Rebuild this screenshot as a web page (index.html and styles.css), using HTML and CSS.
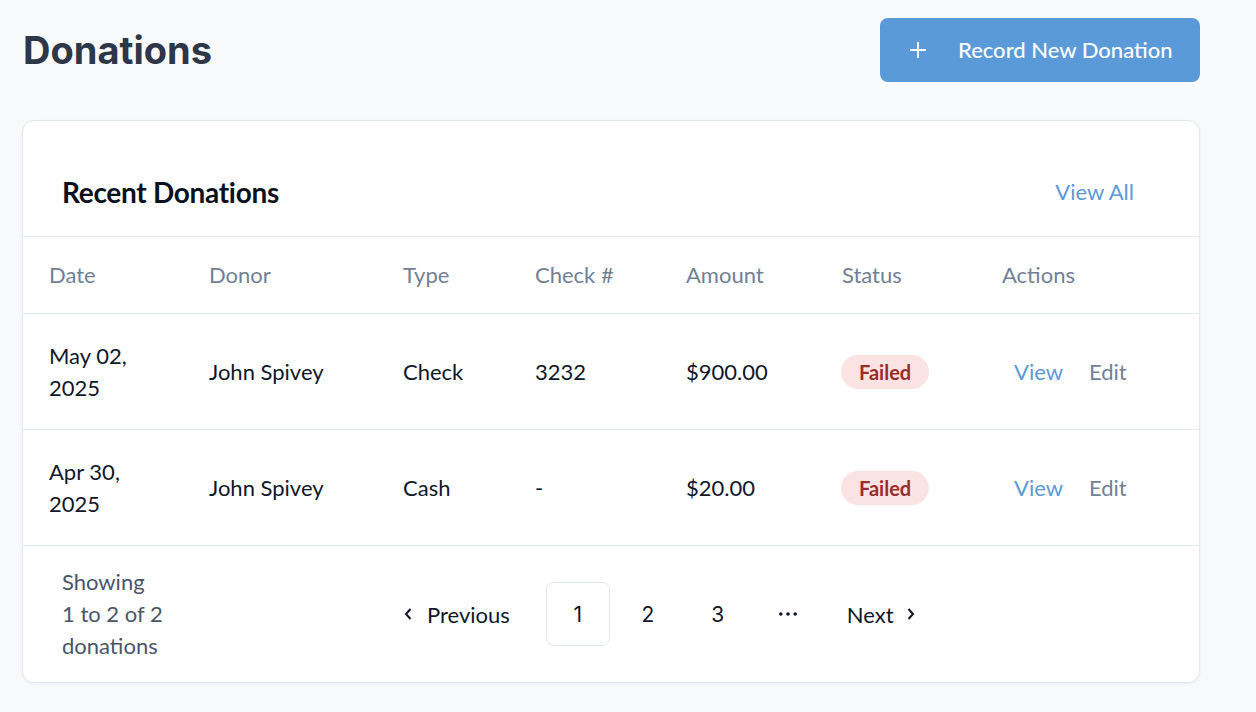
FILE: index.html
```html
<!DOCTYPE html>
<html lang="en">
<head>
<meta charset="utf-8">
<title>Donations</title>
<link rel="stylesheet" href="styles.css">
</head>
<body>
<div class="page">
  <header class="page-head">
    <h1 class="page-title">Donations</h1>
    <button class="btn-primary" type="button">
      <svg class="btn-icon" width="18" height="18" viewBox="0 0 18 18" aria-hidden="true"><path d="M9 1v16M1 9h16" stroke="#fff" stroke-width="1.8" fill="none"/></svg>
      <span>Record New Donation</span>
    </button>
  </header>

  <section class="card">
    <div class="card-head">
      <h2 class="card-title">Recent Donations</h2>
      <a class="view-all" href="#">View All</a>
    </div>
    <table class="table">
      <colgroup>
        <col class="c-date"><col class="c-donor"><col class="c-type"><col class="c-check"><col class="c-amount"><col class="c-status"><col class="c-actions">
      </colgroup>
      <thead>
        <tr><th>Date</th><th>Donor</th><th>Type</th><th>Check #</th><th>Amount</th><th>Status</th><th>Actions</th></tr>
      </thead>
      <tbody>
        <tr>
          <td>May 02, 2025</td><td>John Spivey</td><td>Check</td><td>3232</td><td>$900.00</td>
          <td><span class="badge">Failed</span></td>
          <td class="actions"><a class="link-view" href="#">View</a><a class="link-edit" href="#">Edit</a></td>
        </tr>
        <tr>
          <td>Apr 30, 2025</td><td>John Spivey</td><td>Cash</td><td>-</td><td>$20.00</td>
          <td><span class="badge">Failed</span></td>
          <td class="actions"><a class="link-view" href="#">View</a><a class="link-edit" href="#">Edit</a></td>
        </tr>
      </tbody>
    </table>
    <div class="card-foot">
      <p class="showing">Showing <span class="nowrap">1 to 2 of 2</span> donations</p>
      <nav class="pager">
        <a class="pager-prev" href="#"><svg width="10" height="14" viewBox="0 0 10 14" aria-hidden="true"><path d="M7.5 2L3 7L7.5 12" stroke="#0f172a" stroke-width="2" fill="none"/></svg><span>Previous</span></a>
        <a class="page-num current" href="#">1</a>
        <a class="page-num" href="#">2</a>
        <a class="page-num" href="#">3</a>
        <span class="page-num dots"><svg width="20" height="4" viewBox="0 0 20 4" aria-hidden="true"><circle cx="2" cy="2" r="2" fill="#0f172a"/><circle cx="10" cy="2" r="2" fill="#0f172a"/><circle cx="18" cy="2" r="2" fill="#0f172a"/></svg></span>
        <a class="pager-next" href="#"><span>Next</span><svg width="10" height="14" viewBox="0 0 10 14" aria-hidden="true"><path d="M2.5 2L7 7L2.5 12" stroke="#0f172a" stroke-width="2" fill="none"/></svg></a>
      </nav>
    </div>
  </section>
</div>
</body>
</html>
```

FILE: styles.css
```css
* { box-sizing: border-box; }
html, body { margin: 0; padding: 0; }
body {
  background: #f8f9fb;
  font-family: "Lato", "Noto Sans", sans-serif;
  color: #0f172a;
  width: 1256px;
  height: 712px;
  overflow: hidden;
}
.page { padding: 18px 56px 0 22px; }
.page-head {
  display: flex;
  justify-content: space-between;
  align-items: flex-start;
  margin-bottom: 38px;
}
.page-title {
  margin: 8px 0 0 1px;
  font-family: "Inter", sans-serif;
  font-weight: 700;
  font-size: 38px;
  line-height: 48px;
  color: #2d3748;
  letter-spacing: 0;
}
.btn-primary {
  display: flex;
  align-items: center;
  height: 64px;
  width: 320px;
  padding: 0 0 1px 29px;
  border: 0;
  border-radius: 8px;
  background: #5b9ad9;
  color: #fff;
  font-family: "Lato", sans-serif;
  font-size: 22px;
  font-weight: 500;
}
.btn-icon { margin-right: 31px; }
.card {
  background: #fff;
  border: 1px solid #e2e8f0;
  border-radius: 12px;
  box-shadow: 0 1px 3px rgba(15, 23, 42, 0.06);
  width: 1178px;
  overflow: hidden;
}
.card-head {
  display: flex;
  justify-content: space-between;
  align-items: center;
  height: 116px;
  padding: 26px 65px 0 39px;
  border-bottom: 1px solid #e2e8f0;
}
.card-title {
  margin: 0;
  font-size: 28px;
  font-weight: 700;
  color: #0b1120;
  letter-spacing: -0.3px;
}
.view-all {
  color: #5b9ad9;
  font-size: 22px;
  text-decoration: none;
}
.table {
  width: 100%;
  border-collapse: collapse;
  table-layout: fixed;
}
.c-date { width: 160px; }
.c-donor { width: 194px; }
.c-type { width: 132px; }
.c-check { width: 151px; }
.c-amount { width: 156px; }
.c-status { width: 160px; }
.table th {
  text-align: left;
  font-weight: 400;
  font-size: 22px;
  line-height: 32px;
  color: #718096;
  padding: 22px 26px 22px 26px;
  border-bottom: 1px solid #e2e8f0;
}
.table td {
  font-size: 22px;
  line-height: 32px;
  padding: 26px 20px 25px 26px;
  border-bottom: 1px solid #e2e8f0;
  vertical-align: middle;
}
.badge {
  display: inline-block;
  padding: 0 18px 0 18px;
  height: 34px;
  line-height: 34px;
  border-radius: 17px;
  background: #fbe3e3;
  color: #9b2c2c;
  font-size: 20px;
  font-weight: 700;
  margin-left: -1px;
}
.actions a { text-decoration: none; }
.link-view { color: #5b9ad9; margin-left: 12px; }
.link-edit { color: #718096; margin-left: 26px; }
.card-foot {
  display: flex;
  align-items: center;
  padding: 20px 40px 20px 39px;
  height: 136px;
}
.showing {
  margin: 0;
  width: 96px;
  flex-shrink: 0;
  font-size: 22px;
  line-height: 32px;
  color: #4a5568;
}
.nowrap { white-space: nowrap; }
.pager {
  display: flex;
  align-items: center;
  margin-left: 245px;
}
.pager a, .pager span { text-decoration: none; color: #0f172a; }
.pager-prev, .pager-next {
  display: flex;
  align-items: center;
  font-size: 22px;
}
.pager-prev svg { margin-right: 14px; }
.pager-prev { margin-right: 36px; }
.pager-next svg { margin-left: 12px; }
.pager-next { margin-left: 27px; }
.page-num {
  display: flex;
  align-items: center;
  justify-content: center;
  width: 64px;
  height: 64px;
  font-family: "Inter", sans-serif;
  font-size: 21px;
  margin-right: 6px;
  border: 1px solid transparent;
  border-radius: 8px;
}
.page-num.current { border-color: #e2e8f0; }
.page-num.dots { margin-right: 0; }
.page-num.dots svg { width: 18px; height: 4px; }
```
